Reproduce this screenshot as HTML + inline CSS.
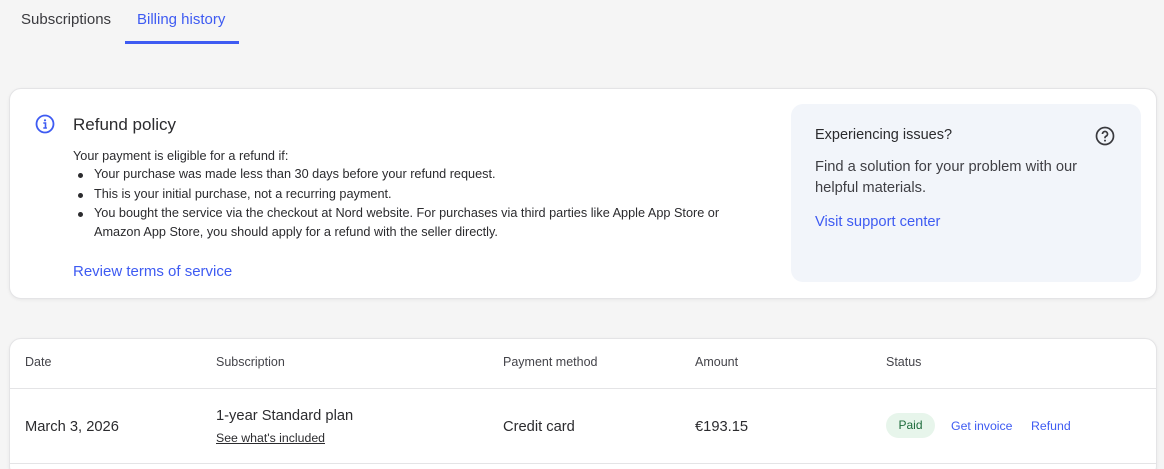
<!DOCTYPE html>
<html><head><meta charset="utf-8"><style>
*{box-sizing:border-box;margin:0;padding:0}
html,body{width:1164px;height:469px;overflow:hidden}
body{background:#f5f5f5;font-family:"Liberation Sans",sans-serif;color:#2b2b2e;position:relative}
.a{position:absolute;white-space:nowrap}
.blue{color:#3e5bf2}
.card{position:absolute;background:#fff;border:1px solid #e4e4e6;border-radius:12px;box-shadow:0 1px 3px rgba(0,0,0,.06)}
.s{font-size:12.7px;color:#2b2b2e}
.b{position:absolute;left:78px;width:5px;height:5px;border-radius:50%;background:#2b2b2e}
</style></head><body>
<div class="a" style="left:21px;top:11px;font-size:15px;color:#3a3a3e">Subscriptions</div>
<div class="a blue" style="left:137px;top:11px;font-size:15px">Billing history</div>
<div class="a" style="left:125px;top:41px;width:114px;height:3px;background:#3e5bf2"></div>

<div class="card" style="left:9px;top:88px;width:1148px;height:211px"></div>
<svg class="a" style="left:35px;top:114px" width="20" height="20" viewBox="0 0 20 20"><circle cx="10" cy="10" r="8.5" fill="none" stroke="#3e5bf2" stroke-width="1.8"/><circle cx="10" cy="6.3" r="1.1" fill="#3e5bf2"/><path d="M8.3 9h2.2v5M8.3 14h3.6" stroke="#3e5bf2" stroke-width="1.6" fill="none"/></svg>
<div class="a" style="left:73px;top:115px;font-size:17px;color:#2b2b2e">Refund policy</div>
<div class="a s" style="left:73px;top:149px">Your payment is eligible for a refund if:</div>
<div class="b" style="top:173px"></div><div class="a s" style="left:94px;top:167px">Your purchase was made less than 30 days before your refund request.</div>
<div class="b" style="top:193px"></div><div class="a s" style="left:94px;top:187px">This is your initial purchase, not a recurring payment.</div>
<div class="b" style="top:212px"></div><div class="a s" style="left:94px;top:206px">You bought the service via the checkout at Nord website. For purchases via third parties like Apple App Store or</div>
<div class="a s" style="left:94px;top:225px">Amazon App Store, you should apply for a refund with the seller directly.</div>
<div class="a blue" style="left:73px;top:263px;font-size:15px">Review terms of service</div>

<div class="a" style="left:791px;top:104px;width:350px;height:178px;background:#f2f5fa;border-radius:12px"></div>
<div class="a" style="left:815px;top:127px;font-size:14.5px;color:#2b2b2e">Experiencing issues?</div>
<svg class="a" style="left:1095px;top:126px" width="20" height="20" viewBox="0 0 20 20"><circle cx="10" cy="10" r="8.5" fill="none" stroke="#3a3a3e" stroke-width="1.7"/><path d="M7.5 8a2.5 2.5 0 1 1 3.4 2.3c-.6.3-.9.7-.9 1.4v.5" fill="none" stroke="#3a3a3e" stroke-width="1.7"/><circle cx="10" cy="14.6" r="1" fill="#3a3a3e"/></svg>
<div class="a" style="left:815px;top:157px;font-size:14.7px;line-height:21px;color:#3f3f44;white-space:normal;width:300px">Find a solution for your problem with our helpful materials.</div>
<div class="a blue" style="left:815px;top:214px;font-size:14.7px">Visit support center</div>

<div class="card" style="left:9px;top:338px;width:1148px;height:140px"></div>
<div class="a" style="left:10px;top:388px;width:1146px;height:1px;background:#e4e4e6"></div>
<div class="a" style="left:10px;top:463px;width:1146px;height:1px;background:#e4e4e6"></div>
<div class="a" style="left:25px;top:355px;font-size:12.5px;color:#44444a">Date</div>
<div class="a" style="left:216px;top:355px;font-size:12.5px;color:#44444a">Subscription</div>
<div class="a" style="left:503px;top:355px;font-size:12.5px;color:#44444a">Payment method</div>
<div class="a" style="left:695px;top:355px;font-size:12.5px;color:#44444a">Amount</div>
<div class="a" style="left:886px;top:355px;font-size:12.5px;color:#44444a">Status</div>
<div class="a" style="left:25px;top:419px;font-size:14.7px">March 3, 2026</div>
<div class="a" style="left:216px;top:408px;font-size:14.7px">1-year Standard plan</div>
<div class="a" style="left:216px;top:431px;font-size:12.3px;text-decoration:underline">See what's included</div>
<div class="a" style="left:503px;top:419px;font-size:14.7px">Credit card</div>
<div class="a" style="left:695px;top:419px;font-size:14.7px">€193.15</div>
<div class="a" style="left:886px;top:413px;width:49px;height:25px;border-radius:13px;background:#e7f5eb;color:#1e6b3c;font-size:12px;text-align:center;line-height:25px">Paid</div>
<div class="a blue" style="left:951px;top:419px;font-size:12.3px">Get invoice</div>
<div class="a blue" style="left:1031px;top:419px;font-size:12.3px">Refund</div>
</body></html>
